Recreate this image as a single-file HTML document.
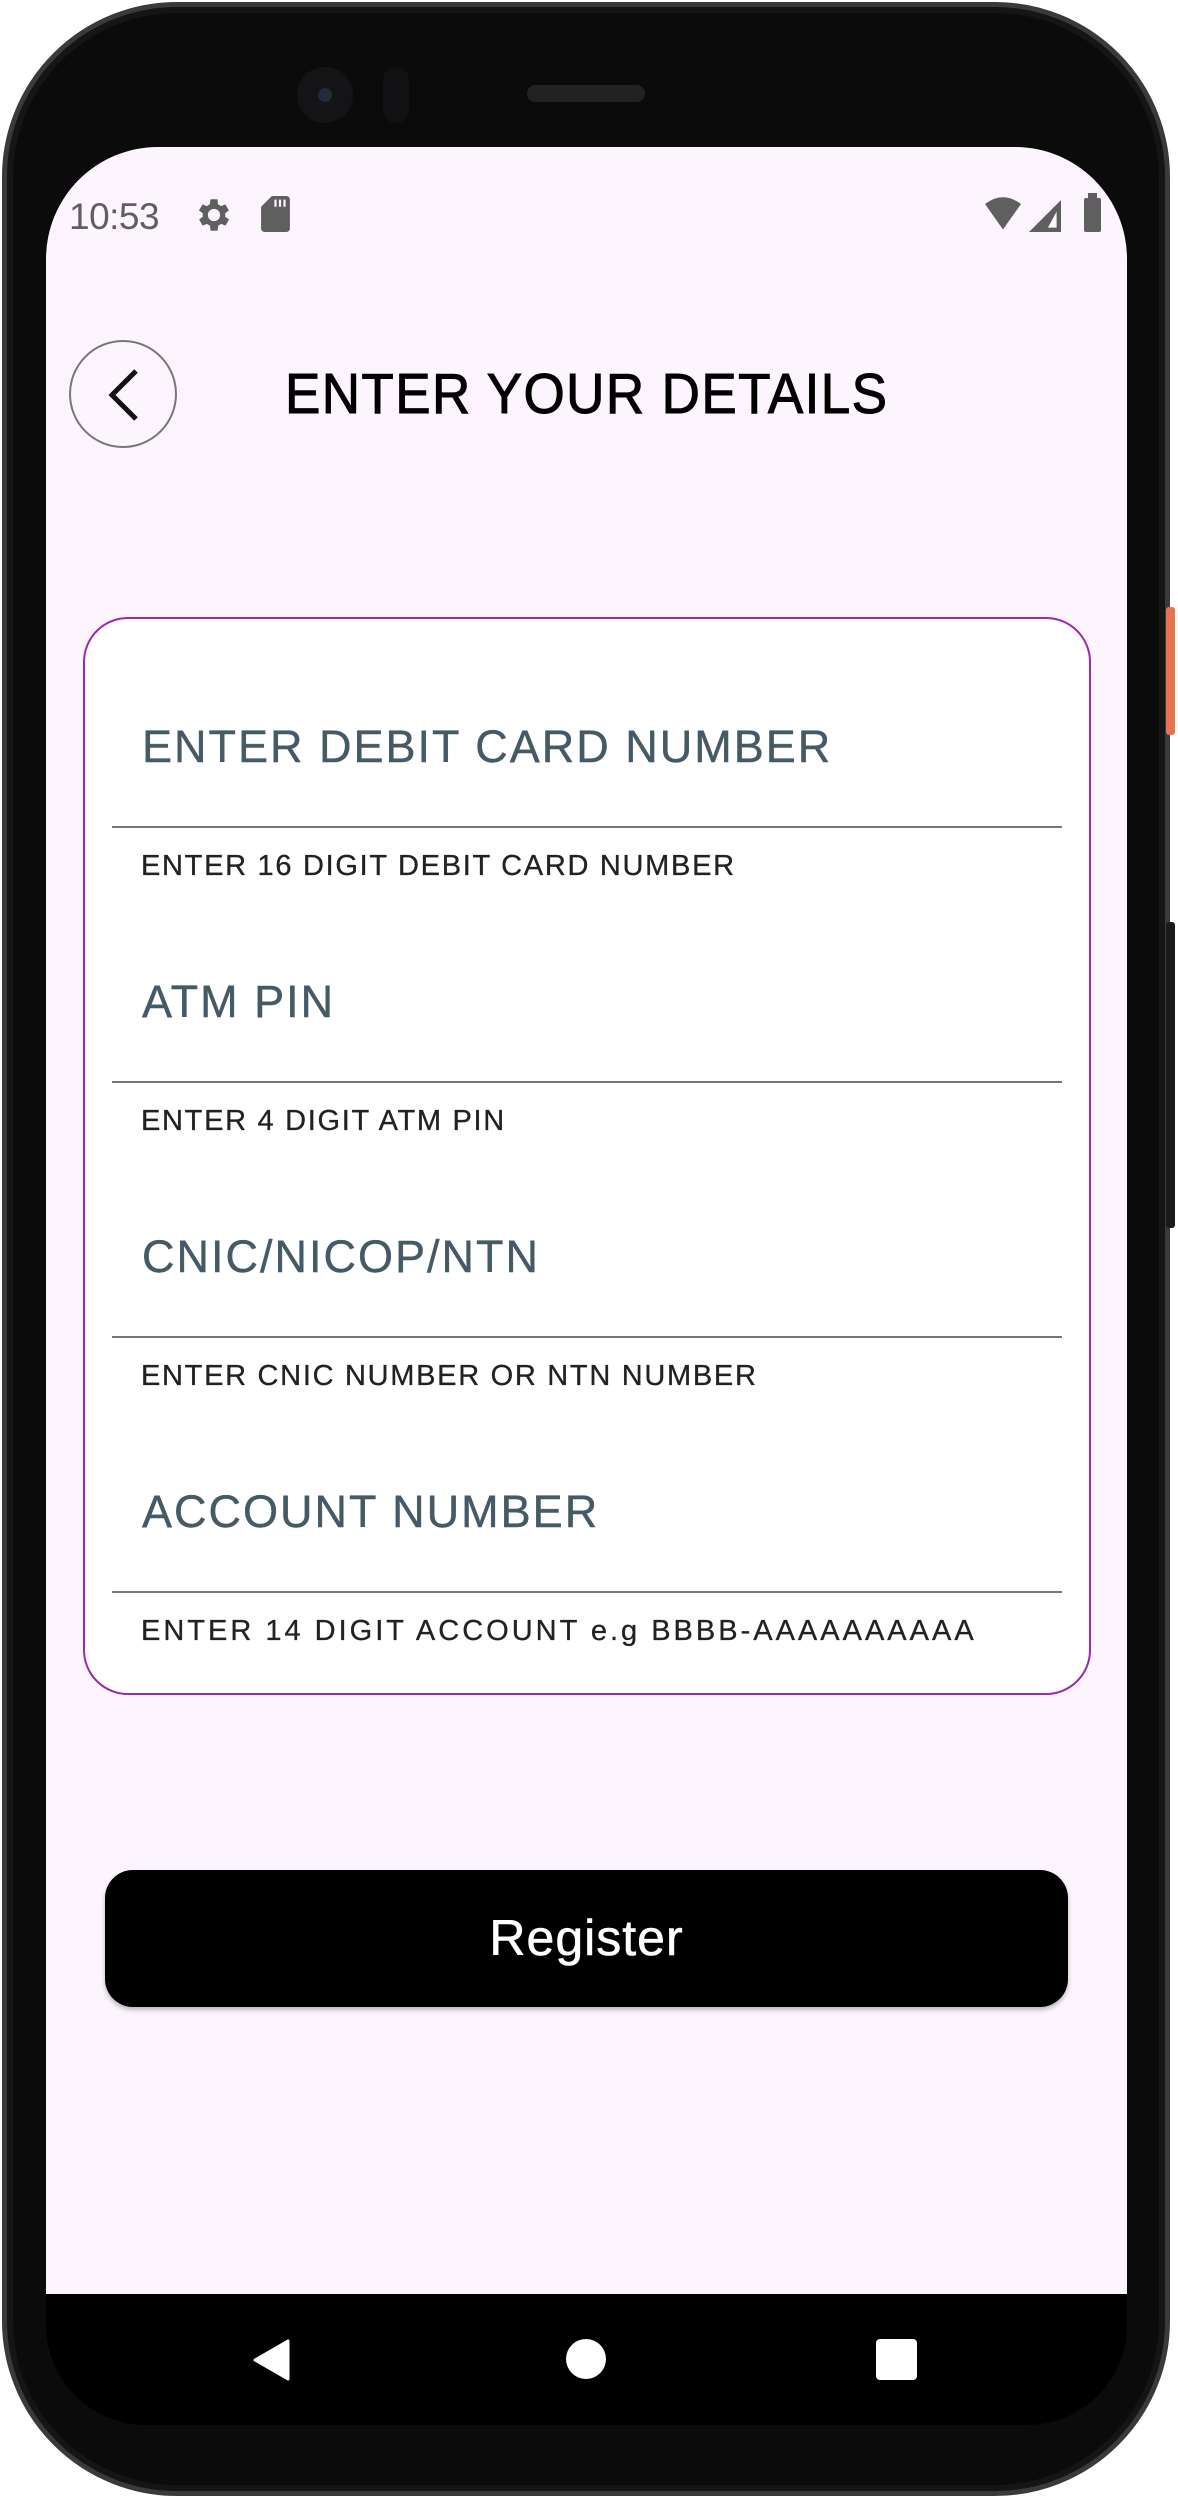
<!DOCTYPE html>
<html><head><meta charset="utf-8"><style>
*{margin:0;padding:0;box-sizing:border-box}
body{width:1178px;height:2498px;background:#fff;position:relative;overflow:hidden;font-family:"Liberation Sans",sans-serif}
.abs{position:absolute}
.phone{left:2px;top:2px;width:1168px;height:2494px;border-radius:175px;background:#0b0b0c;border:5px solid #3a3a3c;box-shadow:inset 0 0 0 6px #151515}
.screen{left:46px;top:147px;width:1081px;height:2147px;background:#fcf5fd;border-radius:112px 112px 0 0}
.nav{left:46px;top:2294px;width:1081px;height:131px;background:#000;border-radius:0 0 100px 100px}
.lbl{left:142px;color:#455a64;font-size:45px;letter-spacing:2px;line-height:1;-webkit-text-stroke:0.4px #455a64}
.help{left:141px;color:#222;font-size:29px;letter-spacing:1.7px;line-height:1;-webkit-text-stroke:0.3px #222}
.line{left:112px;width:950px;height:2px;background:#777}
</style></head><body>
<div class="abs phone"></div>
<div class="abs" style="left:1166px;top:607px;width:9px;height:128px;background:#e8734f;border-radius:3px"></div>
<div class="abs" style="left:1166px;top:922px;width:9px;height:306px;background:#1a1a1a;border-radius:3px"></div>
<div class="abs" style="left:297px;top:67px;width:56px;height:56px;border-radius:50%;background:#141417"></div>
<div class="abs" style="left:318px;top:88px;width:14px;height:14px;border-radius:50%;background:#232a3a"></div>
<div class="abs" style="left:383px;top:67px;width:26px;height:56px;border-radius:13px;background:#111113"></div>
<div class="abs" style="left:527px;top:85px;width:118px;height:17px;border-radius:9px;background:#222"></div>
<div class="abs screen"></div>
<div class="abs" style="left:69px;top:196px;font-size:37px;color:#5f5f5f;letter-spacing:-0.5px">10:53</div>
<svg class="abs" style="left:193px;top:194px" width="42" height="42" viewBox="0 0 24 24"><path fill="#5f5f5f" d="M19.4 13a7.5 7.5 0 000-2l2.1-1.6-2-3.5-2.5 1a7 7 0 00-1.7-1L15 3h-4l-.4 2.9a7 7 0 00-1.7 1l-2.5-1-2 3.5L6.6 11a7.5 7.5 0 000 2l-2.1 1.6 2 3.5 2.5-1a7 7 0 001.7 1L11 21h4l.4-2.9a7 7 0 001.7-1l2.5 1 2-3.5zM13 15.5A3.5 3.5 0 1113 8.5a3.5 3.5 0 010 7z" transform="translate(-1 0)"/></svg>
<svg class="abs" style="left:261px;top:196px" width="29" height="36" viewBox="0 0 16 20"><path fill="#5f5f5f" d="M6 0h8a2 2 0 012 2v16a2 2 0 01-2 2H2a2 2 0 01-2-2V6z"/><path stroke="#fcf5fd" stroke-width="1.2" d="M8 2v4M10.5 2v4M13 2v4"/></svg>
<svg class="abs" style="left:985px;top:196px" width="36" height="34" viewBox="0 0 24 22"><path fill="#5f5f5f" d="M0 5Q12-4 24 5L12 22z"/></svg>
<svg class="abs" style="left:1028px;top:200px" width="34" height="32" viewBox="0 0 22 22"><path fill="#5f5f5f" d="M22 0v22H0z"/><path fill="#fcf5fd" d="M19 8v11h-6z"/></svg>
<div class="abs" style="left:1084px;top:198px;width:17px;height:34px;background:#5f5f5f;border-radius:2px"></div>
<div class="abs" style="left:1088px;top:193px;width:9px;height:6px;background:#5f5f5f"></div>
<div class="abs" style="left:69px;top:340px;width:108px;height:108px;border-radius:50%;border:2px solid #777"></div>
<svg class="abs" style="left:100px;top:367px" width="44" height="56" viewBox="0 0 44 56"><path d="M36 4L12 28l24 24" fill="none" stroke="#111" stroke-width="5"/></svg>
<div class="abs" style="left:285px;top:366px;font-size:57px;color:#000;letter-spacing:1.5px;line-height:1;transform:scaleX(0.93);transform-origin:left;-webkit-text-stroke:1px #000">ENTER YOUR DETAILS</div>
<div class="abs" style="left:83px;top:617px;width:1008px;height:1078px;background:#fff;border:2px solid #9c27b0;border-radius:45px"></div>
<div class="abs lbl" style="top:724px">ENTER DEBIT CARD NUMBER</div>
<div class="abs line" style="top:826px"></div>
<div class="abs help" style="top:852px">ENTER 16 DIGIT DEBIT CARD NUMBER</div>
<div class="abs lbl" style="top:979px">ATM PIN</div>
<div class="abs line" style="top:1081px"></div>
<div class="abs help" style="top:1107px">ENTER 4 DIGIT ATM PIN</div>
<div class="abs lbl" style="top:1234px">CNIC/NICOP/NTN</div>
<div class="abs line" style="top:1336px"></div>
<div class="abs help" style="top:1362px">ENTER CNIC NUMBER OR NTN NUMBER</div>
<div class="abs lbl" style="top:1489px">ACCOUNT NUMBER</div>
<div class="abs line" style="top:1591px"></div>
<div class="abs help" style="top:1617px;letter-spacing:3px">ENTER 14 DIGIT ACCOUNT e.g BBBB-AAAAAAAAAA</div>
<div class="abs" style="left:105px;top:1870px;width:963px;height:137px;background:#000;border-radius:28px;box-shadow:0 3px 5px rgba(0,0,0,.25);color:#fff;font-size:50px;text-align:center;line-height:137px;letter-spacing:1px;-webkit-text-stroke:0.6px #fff">Register</div>
<div class="abs nav"></div>
<svg class="abs" style="left:252px;top:2339px" width="40" height="42" viewBox="0 0 40 42"><path d="M36 2v38L3 21z" fill="#fff" stroke="#fff" stroke-linejoin="round" stroke-width="3"/></svg>
<div class="abs" style="left:566px;top:2339px;width:40px;height:40px;border-radius:50%;background:#fff"></div>
<div class="abs" style="left:876px;top:2339px;width:41px;height:41px;border-radius:4px;background:#fff"></div>
</body></html>
